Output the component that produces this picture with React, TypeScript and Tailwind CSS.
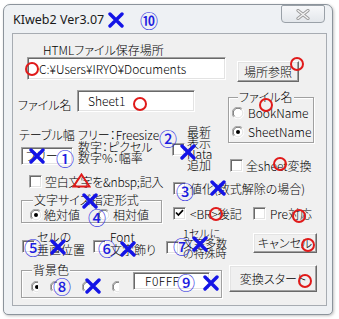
import React from "react";

const jp = "font-['Noto_Sans_CJK_JP',sans-serif] [font-feature-settings:'palt'] font-light";
const sunken =
  "bg-white border border-t-[#a0a0a0] border-l-[#a0a0a0] border-b-white border-r-white shadow-[inset_1px_1px_0_#696969,inset_-1px_-1px_0_#e3e3e3]";
const raised =
  "bg-[#f0f0f0] border border-t-white border-l-white border-b-[#696969] border-r-[#696969] shadow-[inset_-1px_-1px_0_#a0a0a0,inset_1px_1px_0_#e3e3e3] flex items-center justify-center leading-[14px]";
const etched = "border border-[#a0a0a0] shadow-[1px_1px_0_#fff,inset_1px_1px_0_#fff]";

function CB({ checked = false }: { checked?: boolean }) {
  return (
    <span className={`relative inline-block w-[13px] h-[13px] shrink-0 ${sunken}`}>
      {checked && (
        <svg className="absolute left-[1px] top-[1px]" width="9" height="9" viewBox="0 0 9 9">
          <path d="M1 3.5 L3.4 6 L8 1.2" stroke="#000" strokeWidth="1.7" fill="none" />
        </svg>
      )}
    </span>
  );
}

function Radio({ on = false }: { on?: boolean }) {
  return (
    <svg className="shrink-0" width="12" height="12" viewBox="0 0 12 12">
      <circle cx="6" cy="6" r="5.5" fill="#fff" />
      <path d="M1.8 10.2 A5.6 5.6 0 0 1 10.2 1.8" stroke="#a0a0a0" strokeWidth="1" fill="none" />
      <path d="M2.6 9.4 A4.6 4.6 0 0 1 9.4 2.6" stroke="#696969" strokeWidth="1" fill="none" />
      <path d="M10.2 1.8 A5.6 5.6 0 0 1 1.8 10.2" stroke="#ffffff" strokeWidth="1" fill="none" />
      <path d="M9.4 2.6 A4.6 4.6 0 0 1 2.6 9.4" stroke="#e3e3e3" strokeWidth="1" fill="none" />
      {on && <circle cx="6" cy="6" r="2" fill="#000" />}
    </svg>
  );
}

function CropRadio({ on = false, className = "" }: { on?: boolean; className?: string }) {
  return (
    <span className={`inline-flex w-[7px] h-[12px] overflow-hidden shrink-0 ${className}`}>
      <Radio on={on} />
    </span>
  );
}

function BlueX({ cls }: { cls: string }) {
  return (
    <svg className={`absolute ${cls}`} width="16" height="16" viewBox="0 0 16 16">
      <path d="M2 2 L14 14 M14 2 L2 14" stroke="#1414e6" strokeWidth="3.4" strokeLinecap="round" />
    </svg>
  );
}

function Num({ cls, n }: { cls: string; n: string }) {
  return (
    <span
      className={`absolute ${cls} w-[18px] h-[18px] flex items-center justify-center text-[18px] leading-none font-medium text-[#1e1ee0] font-['Noto_Sans_CJK_JP',sans-serif]`}
    >
      {n}
    </span>
  );
}

function RedO({ cls }: { cls: string }) {
  return <span className={`absolute ${cls} w-[14px] h-[14px] rounded-full border-2 border-[#e01a1a]`} />;
}

export default function App() {
  return (
    <div className={`relative w-[339px] h-[319px] bg-white overflow-hidden pl-[3px] pt-[4px] ${jp} text-[12px] text-black`}>
      {/* window */}
      <div className="w-[330px] h-[311px] rounded-t-[7px] rounded-b-[5px] bg-[#eef1f4] border border-[#8c949c] flex flex-col shadow-[1px_1px_3px_rgba(0,0,0,0.25)]">
        {/* title bar */}
        <div className="h-[28px] flex justify-between items-start">
          <span className="pl-[9px] pt-[8px] font-['Noto_Sans',sans-serif] font-normal text-[12.5px] leading-[14px] text-[#1a1a1a]">
            KIweb2 Ver3.07
          </span>
          <div className="mr-[7px] w-[44px] h-[18px] rounded-b-[4px] rounded-t-[2px] border border-[#9aa1a8] bg-gradient-to-b from-[#f7f8fa] to-[#e3e7eb] flex items-center justify-center">
            <svg width="14" height="11" viewBox="0 0 14 11">
              <path d="M2 1.5 L12 9.5 M12 1.5 L2 9.5" stroke="#9a9a9a" strokeWidth="3.2" strokeLinecap="round" />
              <path d="M2 1.5 L12 9.5 M12 1.5 L2 9.5" stroke="#f4f4f4" strokeWidth="1.4" strokeLinecap="round" />
            </svg>
          </div>
        </div>

        {/* client area */}
        <div className="ml-[8px] w-[315px] h-[273px] bg-[#f0f0f0] shadow-[inset_0_0_0_1px_#a7acb2]">
          {/* Row A */}
          <div className="pl-[31px] pt-[10px] leading-[14px] h-[24px]">HTMLファイル保存場所</div>

          {/* Row B */}
          <div className="flex items-start h-[25px]">
            <div className={`ml-[15px] w-[199px] h-[23px] ${sunken} flex items-center pl-[11px] leading-[14px]`}>
              C:¥Users¥IRYO¥Documents
            </div>
            <div className={`ml-[11px] mt-[4px] w-[62px] h-[21px] ${raised}`}>場所参照</div>
          </div>

          {/* Row C */}
          <div className="flex h-[90px]">
            <div className="w-[216px]">
              <div className="mt-[8px] flex items-start h-[22px]">
                <span className="pl-[6px] w-[65px] mt-[9px] leading-[12px]">ファイル名</span>
                <div className={`w-[118px] h-[22px] ${sunken} pl-[10px] flex items-center leading-[14px]`}>Sheet1</div>
              </div>
              <div className="flex mt-[17px]">
                <div className="pl-[7px] w-[66px]">
                  <div className="leading-[12px]">テーブル幅</div>
                  <div className={`ml-[2px] mt-[6px] w-[52px] h-[18px] ${sunken} pl-[4px] flex items-center leading-[14px]`}>
                    フリー
                  </div>
                </div>
                <div className="w-[94px] leading-[11.5px]">
                  <div>フリー：Freesize</div>
                  <div>数字：ピクセル</div>
                  <div>数字%：幅率</div>
                </div>
                <div className="flex">
                  <div className="mt-[13px]">
                    <CB />
                  </div>
                  <div className="ml-[2px] -mt-[3px] leading-[11px]">
                    <div>最新</div>
                    <div>表示</div>
                    <div>Nata</div>
                    <div>追加</div>
                  </div>
                </div>
              </div>
            </div>
            <div>
              <div className={`relative mt-[15px] w-[86px] h-[46px] ${etched}`}>
                <span className="absolute left-[9px] -top-[7px] px-[1px] bg-[#f0f0f0] leading-[12px]">ファイル名</span>
                <div className="pt-[8px] pl-[3px] flex flex-col gap-[5px]">
                  <div className="flex items-center h-[14px] gap-[4px]">
                    <Radio />
                    <span className="leading-[14px]">BookName</span>
                  </div>
                  <div className="flex items-center h-[14px] gap-[4px]">
                    <Radio on />
                    <span className="leading-[14px]">SheetName</span>
                  </div>
                </div>
              </div>
              <div className="mt-[16px] ml-[2px] flex items-center gap-[3px] h-[13px]">
                <CB />
                <span className="leading-[14px]">全sheet変換</span>
              </div>
            </div>
          </div>

          {/* Row D */}
          <div className="flex h-[55px]">
            <div className="w-[158px]">
              <div className="mt-[3px] ml-[17px] flex items-center gap-[3px] h-[13px]">
                <CB />
                <span className="leading-[14px] tracking-[-0.2px]">空白文字を&amp;nbsp;記入</span>
              </div>
              <div className={`relative mt-[12px] ml-[9px] w-[141px] h-[23px] ${etched}`}>
                <span className="absolute left-[11px] -top-[7px] px-[1px] bg-[#f0f0f0] leading-[12px]">文字サイズ指定形式</span>
                <div className="pt-[8px] flex items-center h-[20px]">
                  <div className="w-[76px] pl-[8px] flex items-center gap-[2px]">
                    <Radio on />
                    <span className="leading-[12px]">絶対値</span>
                  </div>
                  <div className="flex items-center gap-[3px]">
                    <Radio />
                    <span className="leading-[12px]">相対値</span>
                  </div>
                </div>
              </div>
            </div>
            <div>
              <div className="mt-[10px] ml-[3px] flex items-center gap-[4px] h-[13px]">
                <CB />
                <span className="leading-[14px]">値化(数式解除の場合)</span>
              </div>
              <div className="mt-[12px] ml-[3px] flex items-center h-[13px]">
                <div className="w-[80px] flex items-center gap-[4px]">
                  <CB checked />
                  <span className="leading-[14px]">&lt;BR&gt;後記</span>
                </div>
                <div className="flex items-center gap-[4px]">
                  <CB />
                  <span className="leading-[14px]">Pre対応</span>
                </div>
              </div>
            </div>
          </div>

          {/* Row E */}
          <div className="flex items-start h-[35px] pl-[10px]">
            <div className="w-[71px] flex items-start gap-[2px]">
              <div className="mt-[12px]">
                <CB />
              </div>
              <div className="mt-[3px] leading-[13px]">
                <div>セルの</div>
                <div>垂直位置</div>
              </div>
            </div>
            <div className="w-[73px] flex items-start gap-[4px]">
              <div className="mt-[12px]">
                <CB />
              </div>
              <div className="mt-[3px] leading-[13px]">
                <div>Font</div>
                <div>文字飾り</div>
              </div>
            </div>
            <div className="flex items-start gap-[4px]">
              <div className="mt-[13px]">
                <CB />
              </div>
              <div className="mt-[1px] leading-[10px] text-[11px]">
                <div>1セルに</div>
                <div>文字多数</div>
                <div>の特殊時</div>
              </div>
            </div>
            <div className={`ml-auto mr-[10px] mt-[6px] w-[64px] h-[20px] ${raised}`}>キャンセル</div>
          </div>

          {/* Row F */}
          <div className="flex items-start h-[44px]">
            <div className={`relative ml-[9px] mt-[8px] w-[201px] h-[28px] ${etched}`}>
              <span className="absolute left-[10px] -top-[7px] px-[1px] bg-[#f0f0f0] leading-[12px]">背景色</span>
              <div className="flex items-start">
                <CropRadio on className="ml-[9px] mt-[10px]" />
                <CropRadio className="ml-[12px] mt-[10px]" />
                <CropRadio className="ml-[25px] mt-[10px]" />
                <CropRadio className="ml-[23px] mt-[10px]" />
                <div className={`ml-[14px] mt-[1px] w-[77px] h-[18px] ${sunken} pl-[11px] flex items-center leading-[14px] tracking-[0.5px]`}>
                  F0FFF
                </div>
              </div>
            </div>
            <div className={`ml-[7px] mt-[3px] w-[88px] h-[27px] ${raised}`}>変換スタート</div>
          </div>
        </div>
      </div>

      {/* annotations */}
      <div className="absolute inset-0 pointer-events-none">
        <BlueX cls="left-[108px] top-[12px]" />
        <Num cls="left-[140px] top-[11px]" n="⑩" />
        <RedO cls="left-[25px] top-[62px]" />
        <RedO cls="left-[133px] top-[97px]" />
        <RedO cls="left-[290px] top-[57px]" />
        <RedO cls="left-[259px] top-[98px]" />
        <RedO cls="left-[273px] top-[157px]" />
        <RedO cls="left-[209px] top-[207px]" />
        <RedO cls="left-[292px] top-[209px]" />
        <RedO cls="left-[301px] top-[238px]" />
        <RedO cls="left-[298px] top-[274px]" />
        <svg className="absolute left-[72px] top-[173px]" width="19" height="15" viewBox="0 0 19 15">
          <path d="M9.5 1.5 L17.5 13.5 L1.5 13.5 Z" stroke="#e01a1a" strokeWidth="2" fill="none" />
        </svg>
        <BlueX cls="left-[29px] top-[148px]" />
        <Num cls="left-[56px] top-[149px]" n="①" />
        <Num cls="left-[159px] top-[129px]" n="②" />
        <BlueX cls="left-[180px] top-[144px]" />
        <Num cls="left-[176px] top-[182px]" n="③" />
        <BlueX cls="left-[210px] top-[180px]" />
        <BlueX cls="left-[82px] top-[193px]" />
        <Num cls="left-[88px] top-[208px]" n="④" />
        <Num cls="left-[24px] top-[238px]" n="⑤" />
        <BlueX cls="left-[50px] top-[239px]" />
        <Num cls="left-[98px] top-[239px]" n="⑥" />
        <BlueX cls="left-[120px] top-[241px]" />
        <Num cls="left-[173px] top-[237px]" n="⑦" />
        <BlueX cls="left-[192px] top-[236px]" />
        <Num cls="left-[53px] top-[277px]" n="⑧" />
        <BlueX cls="left-[85px] top-[278px]" />
        <Num cls="left-[177px] top-[273px]" n="⑨" />
        <BlueX cls="left-[203px] top-[275px]" />
      </div>
    </div>
  );
}
